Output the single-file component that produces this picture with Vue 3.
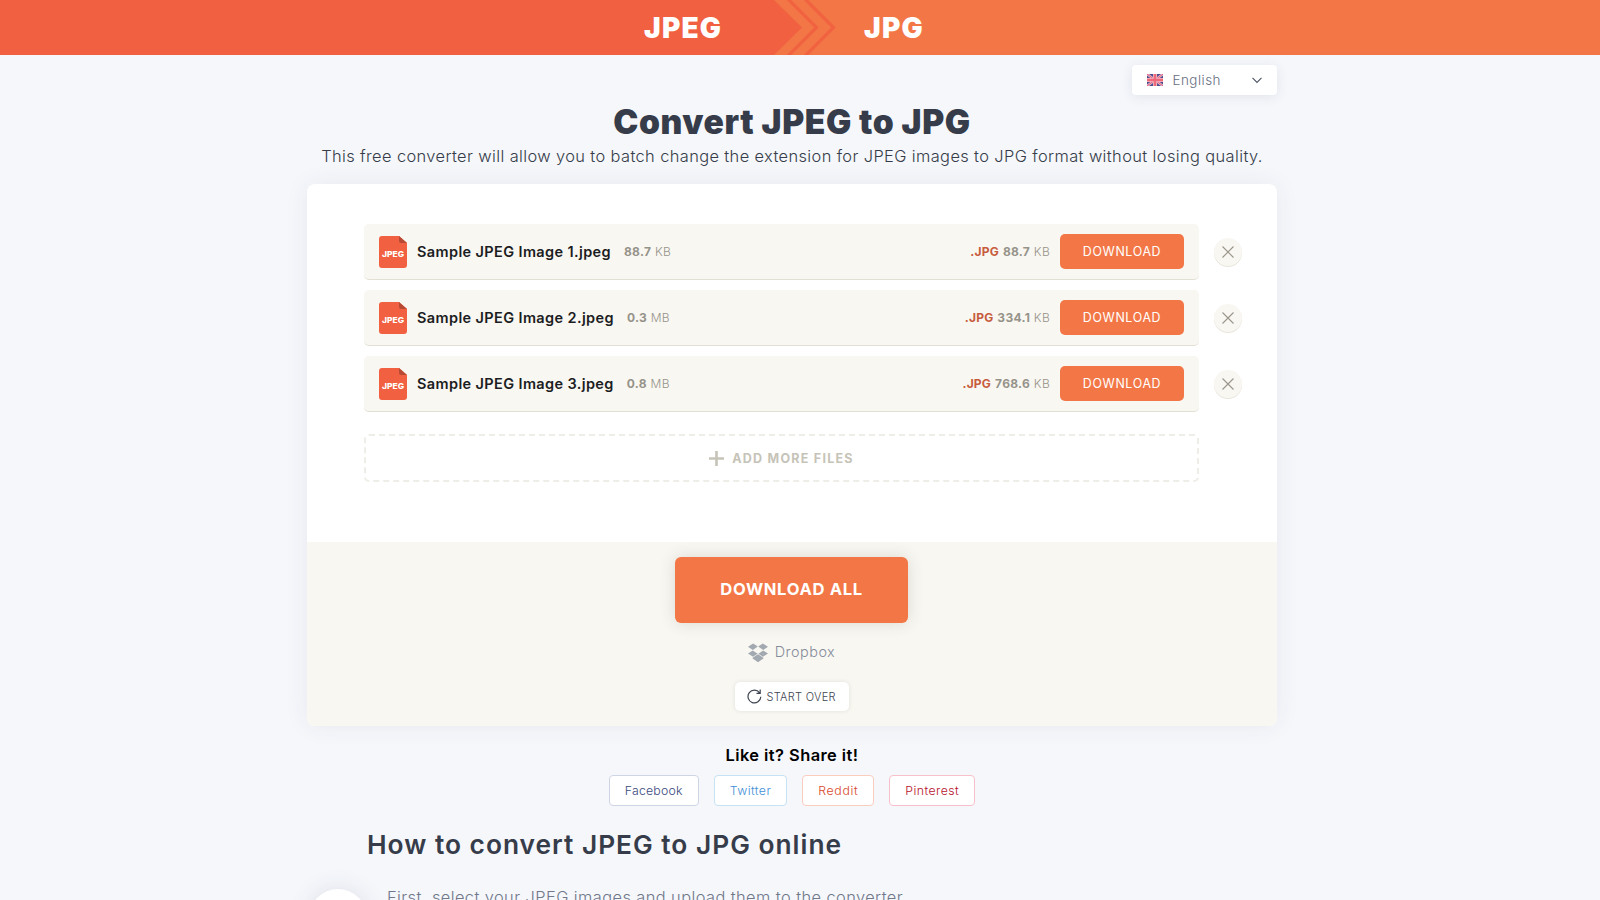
<template>
  <div class="page">
    <header class="topbar">
      <svg class="topbar-arrows" width="70" height="55" viewBox="0 0 70 55">
        <path d="M0 0H6L34 27.5L6 55H0Z" fill="#f16040" />
        <path d="M19 -2L48.5 27.5L19 57" fill="none" stroke="#f16240" stroke-width="3.2" />
        <path d="M36 -2L65.5 27.5L36 57" fill="none" stroke="#f16240" stroke-width="3.2" />
      </svg>
      <div class="topbar-from">JPEG</div>
      <div class="topbar-to">JPG</div>
    </header>

    <main class="container">
      <div class="lang-row">
        <button class="lang">
          <svg class="flag" width="16" height="12" viewBox="0 0 16 12">
            <rect width="16" height="12" fill="#4f4d8f" />
            <path d="M0 0L16 12M16 0L0 12" stroke="#e9bccb" stroke-width="2.4" />
            <path d="M0 0L16 12M16 0L0 12" stroke="#e2607a" stroke-width="1" />
            <path d="M8 0V12M0 6H16" stroke="#f2b9c4" stroke-width="4" />
            <path d="M8 0V12M0 6H16" stroke="#ee6a7a" stroke-width="2.4" />
          </svg>
          <span class="lang-name">English</span>
          <svg class="chevron" width="10" height="7" viewBox="0 0 10 7">
            <path d="M0.5 0.8L5 5.4L9.5 0.8" fill="none" stroke="#4c5462" stroke-width="1.1" />
          </svg>
        </button>
      </div>

      <h1 class="title">Convert JPEG to JPG</h1>
      <p class="subtitle">
        This free converter will allow you to batch change the extension for JPEG images to JPG format without losing quality.
      </p>

      <section class="card">
        <div class="card-body">
          <div v-for="file in files" :key="file.name" class="file-row">
            <div class="file">
              <svg class="file-icon" width="28" height="32" viewBox="0 0 28 32">
                <path d="M3 0H20L28 7V29A3 3 0 0 1 25 32H3A3 3 0 0 1 0 29V3A3 3 0 0 1 3 0Z" fill="#f16040" />
                <path d="M20 0L28 7H22A2 2 0 0 1 20 5Z" fill="#b84a35" />
                <text x="14" y="21" text-anchor="middle" textLength="22" lengthAdjust="spacingAndGlyphs">JPEG</text>
              </svg>
              <span class="file-name">{{ file.name }}</span>
              <span class="file-size"><b>{{ file.size }}</b> {{ file.unit }}</span>
              <span class="file-ext">.JPG</span>
              <span class="file-size out"><b>{{ file.outSize }}</b> KB</span>
              <button class="download">DOWNLOAD</button>
            </div>
            <button class="remove">
              <svg width="12" height="12" viewBox="0 0 12 12">
                <path d="M0.5 0.5L11.5 11.5M11.5 0.5L0.5 11.5" stroke="#98958a" stroke-width="1.1" />
              </svg>
            </button>
          </div>

          <button class="add-more">
            <svg width="15" height="15" viewBox="0 0 15 15">
              <path d="M7.5 0V15M0 7.5H15" stroke="#c6c3b8" stroke-width="2.6" />
            </svg>
            <span>ADD MORE FILES</span>
          </button>
        </div>

        <div class="card-footer">
          <button class="download-all">DOWNLOAD ALL</button>
          <a class="dropbox">
            <svg width="20" height="20" viewBox="0 0 20 20" fill="#a3a9b1">
              <path d="M5.2 0.5L9.8 3.6L4.8 6.9L0 3.7ZM14.8 0.5L20 3.7L15.2 6.9L10.2 3.6ZM4.8 7.4L9.6 10.7L5 13.8L0 10.6ZM15.2 7.4L20 10.6L15 13.8L10.4 10.7ZM10 11.2L15.4 14.8V15.6L10 19.2L4.6 15.6V14.8Z" />
            </svg>
            <span>Dropbox</span>
          </a>
          <button class="start-over">
            <svg width="15" height="15" viewBox="0 0 15 15">
              <path d="M13.8 7.8A6.4 6.4 0 1 1 12.6 3.8M13.2 0.6V4.3H9.5" fill="none" stroke="#3d4350" stroke-width="1.2" />
            </svg>
            <span>START OVER</span>
          </button>
        </div>
      </section>

      <section class="share">
        <h3 class="share-title">Like it? Share it!</h3>
        <div class="share-links">
          <a v-for="item in shares" :key="item.id" class="share-link" :class="item.id">{{ item.label }}</a>
        </div>
      </section>

      <section class="howto">
        <h2 class="howto-title">How to convert JPEG to JPG online</h2>
        <div class="step">
          <span class="step-badge"></span>
          <p class="step-text">First, select your JPEG images and upload them to the converter.</p>
        </div>
      </section>
    </main>
  </div>
</template>

<script setup>
const files = [
  { name: 'Sample JPEG Image 1.jpeg', size: '88.7', unit: 'KB', outSize: '88.7' },
  { name: 'Sample JPEG Image 2.jpeg', size: '0.3', unit: 'MB', outSize: '334.1' },
  { name: 'Sample JPEG Image 3.jpeg', size: '0.8', unit: 'MB', outSize: '768.6' }
]

const shares = [
  { id: 'facebook', label: 'Facebook' },
  { id: 'twitter', label: 'Twitter' },
  { id: 'reddit', label: 'Reddit' },
  { id: 'pinterest', label: 'Pinterest' }
]
</script>

<style>
body {
  background: #f5f7fb;
  overflow: hidden;
}
</style>

<style scoped>
.page {
  height: 900px;
  overflow: hidden;
  font-family: Inter, sans-serif;
  background: #f5f7fb;
  color: #363c49;
}

h1, h2, h3, p {
  margin: 0;
}

button {
  font-family: inherit;
  border: 0;
  padding: 0;
}

/* Header */
.topbar {
  position: relative;
  display: flex;
  height: 55px;
  background: linear-gradient(90deg, #f16040 768px, #f37746 768px);
  color: #fff;
  font-size: 28px;
  font-weight: 900;
  line-height: 56px;
  letter-spacing: 1.2px;
}

.topbar-arrows {
  position: absolute;
  left: 768px;
  top: 0;
}

.topbar-from {
  width: 864px;
  padding-left: 644px;
  box-sizing: border-box;
}

.container {
  width: 970px;
  margin-left: 307px;
}

/* Language switcher */
.lang-row {
  display: flex;
  justify-content: flex-end;
  padding-top: 10px;
}

.lang {
  display: flex;
  align-items: center;
  width: 145px;
  height: 30px;
  padding: 0 15px;
  background: #fff;
  border-radius: 4px;
  box-shadow: 0 2px 12px rgba(50, 55, 80, 0.1);
  color: #666e80;
  font-size: 13.4px;
  font-weight: 300;
  letter-spacing: 0.5px;
}

.lang-name {
  margin-left: 9.5px;
}

.chevron {
  margin-left: auto;
}

.title {
  height: 40px;
  margin-top: 7px;
  text-align: center;
  font-size: 33.6px;
  font-weight: 900;
  line-height: 40px;
  letter-spacing: 0.58px;
  white-space: nowrap;
}

.subtitle {
  height: 24px;
  margin-top: 2px;
  text-align: center;
  font-size: 16.4px;
  font-weight: 300;
  line-height: 24px;
  letter-spacing: 0.39px;
  white-space: nowrap;
}

/* Converter card */
.card {
  margin-top: 16px;
  height: 542px;
  border-radius: 8px;
  background: #fff;
  box-shadow: 0 0 24px rgba(50, 55, 80, 0.07);
  overflow: hidden;
}

.card-body {
  height: 358px;
  padding: 40px 35px 0 57px;
  box-sizing: border-box;
}

.file-row {
  display: flex;
  align-items: center;
  gap: 15px;
  margin-bottom: 10px;
}

.file {
  display: flex;
  align-items: center;
  width: 835px;
  height: 56px;
  padding: 0 15px;
  box-sizing: border-box;
  background: #f9f7f2;
  border-bottom: 1px solid #e2dfd3;
  border-radius: 5px;
  white-space: nowrap;
}

.file-icon text {
  fill: #fff;
  font-size: 8px;
  font-weight: 800;
}

.file-name {
  margin-left: 10px;
  color: #1c1d22;
  font-size: 14.5px;
  font-weight: 600;
  letter-spacing: 0.38px;
}

.file-size {
  margin-left: 13px;
  color: #96938a;
  font-size: 12px;
  font-weight: 300;
  letter-spacing: 0.3px;
}

.file-size b {
  font-weight: 700;
}

.file-ext {
  margin-left: auto;
  color: #c75c3c;
  font-size: 12px;
  font-weight: 700;
  letter-spacing: 0.2px;
}

.file-size.out {
  margin-left: 4px;
}

.download {
  width: 124px;
  height: 35px;
  margin-left: 10px;
  border-radius: 5px;
  background: #f37746;
  color: #fff;
  font-size: 12.4px;
  letter-spacing: 0.65px;
}

.remove {
  display: flex;
  align-items: center;
  justify-content: center;
  width: 28px;
  height: 28px;
  border-radius: 50%;
  background: #f9f7f2;
  box-shadow: 0 1px 0 #e8e5dc;
}

.add-more {
  display: flex;
  align-items: center;
  justify-content: center;
  gap: 8px;
  width: 835px;
  height: 48px;
  margin-top: 22px;
  border: 2px dashed #efede7;
  border-radius: 5px;
  background: none;
  color: #c6c3b8;
  font-size: 12.5px;
  font-weight: 700;
  letter-spacing: 1.25px;
}

.card-footer {
  display: flex;
  flex-direction: column;
  align-items: center;
  height: 184px;
  padding: 15px 1px 0 0;
  box-sizing: border-box;
  background: #f9f7f2;
}

.download-all {
  width: 233px;
  height: 66px;
  padding-bottom: 2px;
  border-radius: 6px;
  background: #f37746;
  box-shadow: 0 0 16px rgba(60, 60, 40, 0.16);
  color: #fff;
  font-size: 16.6px;
  font-weight: 700;
  letter-spacing: 0.65px;
}

.dropbox {
  display: flex;
  align-items: center;
  gap: 7px;
  height: 20px;
  margin-top: 20px;
  color: #868d9a;
  font-size: 14.4px;
  font-weight: 300;
  line-height: 18px;
  letter-spacing: 0.5px;
}

.dropbox span {
  padding-bottom: 2px;
}

.start-over {
  display: flex;
  align-items: center;
  gap: 5px;
  width: 114px;
  height: 29px;
  margin-top: 19px;
  padding-left: 12px;
  border-radius: 5px;
  background: #fff;
  box-shadow: 0 0 4px rgba(60, 60, 40, 0.12);
  color: #3d4350;
  font-size: 11px;
  font-weight: 300;
  letter-spacing: 0.3px;
}

/* Share */
.share {
  text-align: center;
}

.share-title {
  margin-top: 19px;
  color: #000;
  font-size: 16.4px;
  font-weight: 600;
  line-height: 20px;
  letter-spacing: 0.46px;
}

.share-links {
  display: flex;
  justify-content: center;
  gap: 15px;
  margin-top: 10px;
}

.share-link {
  height: 31px;
  padding: 0 15px;
  box-sizing: border-box;
  border: 1px solid;
  border-radius: 4px;
  background: #fff;
  font-size: 12.3px;
  font-weight: 300;
  line-height: 29px;
}

.facebook {
  color: #3b4a80;
  border-color: #ced6e6;
  letter-spacing: 0.22px;
}

.twitter {
  color: #3f8fd8;
  border-color: #c6e2f5;
  letter-spacing: 0.45px;
}

.reddit {
  color: #d8482c;
  border-color: #fbcdbf;
  letter-spacing: 0.65px;
}

.pinterest {
  color: #b8102c;
  border-color: #f8c0ca;
  letter-spacing: 0.45px;
}

/* How to */
.howto-title {
  margin-top: 23px;
  padding-left: 60px;
  font-size: 26.3px;
  font-weight: 600;
  line-height: 32px;
  letter-spacing: 1px;
}

.step {
  display: flex;
  align-items: flex-start;
  margin-top: 28px;
}

.step-badge {
  width: 58px;
  height: 58px;
  margin-left: 2px;
  border-radius: 50%;
  background: #fff;
  box-shadow: 0 0 24px rgba(50, 55, 80, 0.12);
}

.step-text {
  margin: -2px 0 0 20px;
  color: #70788a;
  font-size: 16.4px;
  font-weight: 300;
  letter-spacing: 0.42px;
  white-space: nowrap;
}
</style>
